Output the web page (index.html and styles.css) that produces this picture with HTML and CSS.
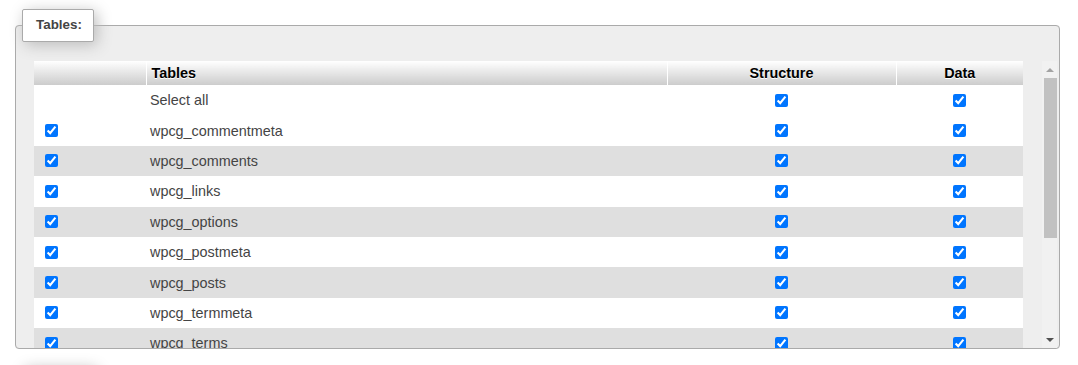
FILE: index.html
```html
<!DOCTYPE html>
<html lang="en">
<head>
    <meta charset="UTF-8">
    <title>Export</title>
    <link rel="stylesheet" href="styles.css">
</head>
<body>
    <fieldset class="tables-box">
        <legend>Tables:</legend>
        <div class="table-scroll">
            <div class="table-viewport">
                <table class="export-table">
                    <thead>
                        <tr>
                            <th class="col-check"></th>
                            <th class="col-name">Tables</th>
                            <th class="col-struct">Structure</th>
                            <th class="col-data">Data</th>
                        </tr>
                    </thead>
                    <tbody>
                        <tr>
                            <td></td>
                            <td>Select all</td>
                            <td class="center"><input type="checkbox" checked></td>
                            <td class="center"><input type="checkbox" checked></td>
                        </tr>
                        <tr><td><input type="checkbox" checked></td><td>wpcg_commentmeta</td><td class="center"><input type="checkbox" checked></td><td class="center"><input type="checkbox" checked></td></tr>
                        <tr><td><input type="checkbox" checked></td><td>wpcg_comments</td><td class="center"><input type="checkbox" checked></td><td class="center"><input type="checkbox" checked></td></tr>
                        <tr><td><input type="checkbox" checked></td><td>wpcg_links</td><td class="center"><input type="checkbox" checked></td><td class="center"><input type="checkbox" checked></td></tr>
                        <tr><td><input type="checkbox" checked></td><td>wpcg_options</td><td class="center"><input type="checkbox" checked></td><td class="center"><input type="checkbox" checked></td></tr>
                        <tr><td><input type="checkbox" checked></td><td>wpcg_postmeta</td><td class="center"><input type="checkbox" checked></td><td class="center"><input type="checkbox" checked></td></tr>
                        <tr><td><input type="checkbox" checked></td><td>wpcg_posts</td><td class="center"><input type="checkbox" checked></td><td class="center"><input type="checkbox" checked></td></tr>
                        <tr><td><input type="checkbox" checked></td><td>wpcg_termmeta</td><td class="center"><input type="checkbox" checked></td><td class="center"><input type="checkbox" checked></td></tr>
                        <tr><td><input type="checkbox" checked></td><td>wpcg_terms</td><td class="center"><input type="checkbox" checked></td><td class="center"><input type="checkbox" checked></td></tr>
                        <tr><td><input type="checkbox" checked></td><td>wpcg_term_relationships</td><td class="center"><input type="checkbox" checked></td><td class="center"><input type="checkbox" checked></td></tr>
                        <tr><td><input type="checkbox" checked></td><td>wpcg_term_taxonomy</td><td class="center"><input type="checkbox" checked></td><td class="center"><input type="checkbox" checked></td></tr>
                        <tr><td><input type="checkbox" checked></td><td>wpcg_usermeta</td><td class="center"><input type="checkbox" checked></td><td class="center"><input type="checkbox" checked></td></tr>
                        <tr><td><input type="checkbox" checked></td><td>wpcg_users</td><td class="center"><input type="checkbox" checked></td><td class="center"><input type="checkbox" checked></td></tr>
                    </tbody>
                </table>
            </div>
            <div class="scrollbar">
                <div class="scroll-btn"><span class="arrow-up"></span></div>
                <div class="scroll-track">
                    <div class="scroll-thumb"></div>
                </div>
                <div class="scroll-btn"><span class="arrow-down"></span></div>
            </div>
        </div>
    </fieldset>
    <div class="next-legend"></div>
</body>
</html>
```

FILE: styles.css
```css
html, body {
    overflow: hidden;
}

body {
    margin: 0;
    font-family: "Liberation Sans", Arial, sans-serif;
    color: #444;
    background: #fff;
}

.tables-box {
    margin: 9px 18px 0 15px;
    padding: 19px 2px 0 0;
    border: 1px solid #aaa;
    border-radius: 4px;
    background: #eee;
    min-width: 0;
}

.tables-box legend {
    margin-left: 6px;
    padding: 7px 11px 8px 13px;
    font-size: 13.4px;
    line-height: 16px;
    font-weight: bold;
    color: #444;
    background: #fff;
    border: 1px solid #aaa;
    border-radius: 2px;
    box-shadow: 3px 3px 15px #bbb;
}

/* table area + hand-drawn scrollbar */
.table-scroll {
    display: flex;
    height: 287px;
}

.table-viewport {
    flex: 1;
    overflow: hidden;
}

.scrollbar {
    width: 15px;
    display: flex;
    flex-direction: column;
    background: #f1f1f1;
}

.scroll-btn {
    height: 17px;
    display: flex;
    align-items: center;
    justify-content: center;
}

.arrow-up {
    width: 0;
    height: 0;
    border-left: 4px solid transparent;
    border-right: 4px solid transparent;
    border-bottom: 4px solid #a3a3a3;
}

.arrow-down {
    width: 0;
    height: 0;
    border-left: 4px solid transparent;
    border-right: 4px solid transparent;
    border-top: 4px solid #505050;
}

.scroll-track {
    flex: 1;
    padding-left: 2px;
}

.scroll-thumb {
    height: 160px;
    background: #c1c1c1;
}

.export-table {
    table-layout: fixed;
    width: 989px;
    margin: 0 0 30px 18px;
    border-collapse: collapse;
    font-size: 14.4px;
}

.export-table th {
    box-sizing: border-box;
    height: 24px;
    padding: 0 5px;
    color: #000;
    font-weight: bold;
    text-shadow: 0 1px 0 #fff;
    background: linear-gradient(#fff, #ccc);
    border-left: 1px solid #fff;
    text-align: center;
}

.export-table th:first-child {
    border-left: none;
}

.export-table .col-check { width: 112px; }
.export-table .col-name { width: 521px; text-align: left; }
.export-table .col-struct { width: 229px; }
.export-table .col-data { width: 127px; }

.export-table td {
    height: 30.4px;
    padding: 0 4px;
    vertical-align: middle;
    background: #fff;
}

.export-table td:first-child {
    padding-left: 7px;
}

.export-table tbody tr:nth-child(2n+3) td {
    background: #dfdfdf;
}

.export-table td.center {
    text-align: center;
}

.export-table input[type="checkbox"] {
    width: 13px;
    height: 13px;
    margin: 3px 3px 3px 4px;
    vertical-align: middle;
}

.export-table td.center input[type="checkbox"] {
    margin: 3px;
}

.next-legend {
    width: 72px;
    height: 30px;
    margin: 17px 0 0 22px;
    background: #fff;
    box-shadow: 3px 3px 15px #bbb;
}
```
